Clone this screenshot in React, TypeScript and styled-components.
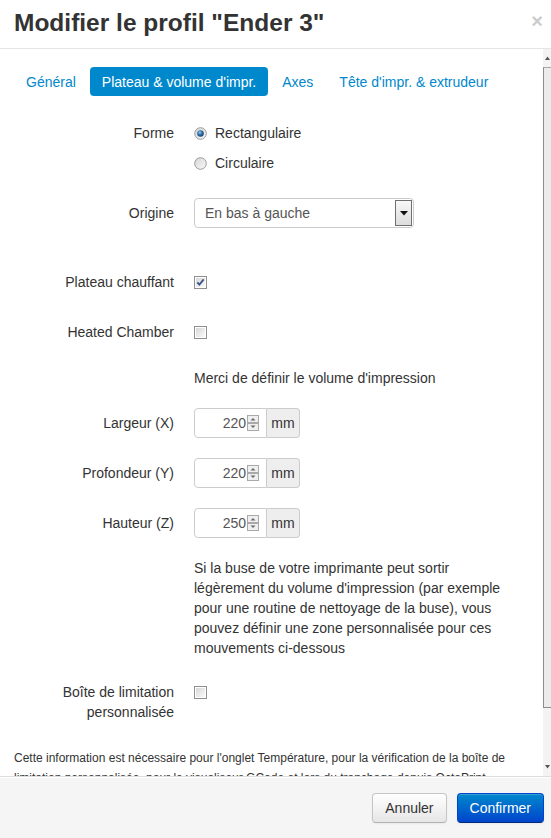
import React from "react";
import styled, { createGlobalStyle } from "styled-components";

const Global = createGlobalStyle`
  html, body { margin: 0; padding: 0; background: #fff; }
  body { font-family: "Liberation Sans", Arial, sans-serif; font-size: 14px; color: #333; }
  * { box-sizing: border-box; }
`;

const Modal = styled.div`
  width: 551px;
  height: 838px;
  display: flex;
  flex-direction: column;
  background: #fff;
  overflow: hidden;
`;

const Header = styled.div`
  height: 49px;
  flex: none;
  display: flex;
  align-items: center;
  justify-content: space-between;
  padding: 0 8px 0 14px;
  border-bottom: 1px solid #e5e5e5;
`;

const Title = styled.h3`
  margin: 0;
  font-size: 24.5px;
  font-weight: bold;
  color: #333;
  line-height: 30px;
  margin-top: -2px;
`;

const Close = styled.span`
  font-size: 20px;
  font-weight: bold;
  color: #000;
  opacity: 0.2;
  line-height: 20px;
  margin-top: -6px;
`;

const Body = styled.div`
  flex: 1;
  min-height: 0;
  display: flex;
`;

const Content = styled.div`
  flex: 1;
  overflow: hidden;
  padding: 18px 0 40px 14px;
`;

const ScrollTrack = styled.div`
  width: 8px;
  flex: none;
  background: #f3f3f3;
  display: flex;
  flex-direction: column;
  align-items: stretch;
`;

const ScrollArrow = styled.div`
  height: 18px;
  flex: none;
  display: flex;
  align-items: center;
  justify-content: center;
`;

const ScrollThumb = styled.div`
  height: 641px;
  flex: none;
  background: #ebebeb;
  border-left: 1px solid #8d8d8d;
  border-top: 1px solid #a8a8a8;
  border-bottom: 1px solid #8d8d8d;
`;

const ScrollRest = styled.div`
  flex: 1;
`;

const Nav = styled.ul`
  list-style: none;
  margin: 0 0 22px;
  padding: 0;
  display: flex;
  gap: 2px;
`;

const Pill = styled.li<{ $active?: boolean }>`
  height: 29px;
  display: flex;
  align-items: center;
  padding: 0 12px;
  border-radius: 4px;
  color: ${(p) => (p.$active ? "#fff" : "#0088cc")};
  background: ${(p) => (p.$active ? "#0088cc" : "transparent")};
  white-space: nowrap;
`;

const Group = styled.div<{ $mt?: number }>`
  display: grid;
  grid-template-columns: 160px 1fr;
  column-gap: 20px;
  margin-top: ${(p) => p.$mt ?? 0}px;
`;

const Label = styled.div<{ $lh?: number }>`
  text-align: right;
  line-height: ${(p) => p.$lh ?? 30}px;
  color: #333;
`;

const Controls = styled.div`
  display: flex;
  flex-direction: column;
  align-items: flex-start;
`;

const Line = styled.div<{ $h?: number }>`
  display: flex;
  align-items: center;
  gap: 8px;
  height: ${(p) => p.$h ?? 30}px;
  line-height: 20px;
`;

const Select = styled.div`
  width: 220px;
  height: 30px;
  border: 1px solid #ccc;
  border-radius: 4px;
  display: flex;
  align-items: center;
  justify-content: space-between;
  padding: 0 1px 0 10px;
  color: #555;
`;

const SelectButton = styled.div`
  width: 17px;
  height: 26px;
  border: 1px solid #6f6f6f;
  background: linear-gradient(#f8f8f8, #dcdcdc);
  display: flex;
  align-items: center;
  justify-content: center;
`;

const InputGroup = styled.div`
  display: flex;
  height: 30px;
`;

const NumberBox = styled.div`
  width: 73px;
  border: 1px solid #ccc;
  border-radius: 4px 0 0 4px;
  display: flex;
  align-items: center;
  justify-content: flex-end;
  padding-right: 7px;
  gap: 1px;
  color: #555;
`;

const AddOn = styled.div`
  width: 33px;
  border: 1px solid #ccc;
  border-left: none;
  border-radius: 0 4px 4px 0;
  background: #eee;
  display: flex;
  align-items: center;
  justify-content: center;
  color: #333;
`;

const Help = styled.p`
  margin: 0;
  width: 320px;
  line-height: 20px;
`;

const Note = styled.p`
  margin: 26px 0 0;
  font-size: 12px;
  line-height: 20px;
  width: 510px;
`;

const Footer = styled.div`
  height: 62px;
  flex: none;
  background: #f5f5f5;
  border-top: 1px solid #ddd;
  box-shadow: inset 0 1px 0 #fff;
  display: flex;
  align-items: center;
  justify-content: flex-end;
  gap: 10px;
  padding: 0 7px 0 0;
`;

const Button = styled.button<{ $primary?: boolean }>`
  height: 30px;
  padding: 0 12px;
  font-family: inherit;
  font-size: 14px;
  border-radius: 4px;
  border: 1px solid ${(p) => (p.$primary ? "#0044cc" : "#c5c5c5")};
  border-bottom-color: ${(p) => (p.$primary ? "#002a80" : "#b3b3b3")};
  color: ${(p) => (p.$primary ? "#fff" : "#333")};
  background: ${(p) =>
    p.$primary ? "linear-gradient(#0088cc, #0044cc)" : "linear-gradient(#ffffff, #e6e6e6)"};
  box-shadow: inset 0 1px 0 rgba(255,255,255,.2), 0 1px 2px rgba(0,0,0,.05);
`;

const Radio = ({ checked }: { checked?: boolean }) => (
  <svg width="13" height="13" viewBox="0 0 13 13">
    <defs>
      <linearGradient id="rg" x1="0" y1="0" x2="1" y2="1">
        <stop offset="0" stopColor="#d4d4d4" />
        <stop offset="1" stopColor="#fafafa" />
      </linearGradient>
      <radialGradient id="rd" cx="0.4" cy="0.35" r="0.7">
        <stop offset="0" stopColor="#9cc6ea" />
        <stop offset="0.5" stopColor="#2e6ca6" />
        <stop offset="1" stopColor="#143e66" />
      </radialGradient>
    </defs>
    <circle cx="6.5" cy="6.5" r="5.8" fill="url(#rg)" stroke="#9a9a9a" strokeWidth="1" />
    {checked && <circle cx="6.5" cy="6.5" r="3.3" fill="url(#rd)" />}
  </svg>
);

const Check = ({ checked }: { checked?: boolean }) => (
  <svg width="13" height="13" viewBox="0 0 13 13">
    <defs>
      <linearGradient id="cg" x1="0" y1="0" x2="1" y2="1">
        <stop offset="0" stopColor="#d6d6d6" />
        <stop offset="1" stopColor="#fbfbfb" />
      </linearGradient>
    </defs>
    <rect x="0.5" y="0.5" width="12" height="12" fill="#fff" stroke="#8f8f8f" />
    <rect x="2" y="2" width="9" height="9" fill="url(#cg)" />
    {checked && (
      <path d="M3.3 6.3 L5.4 8.6 L9.7 3.4" fill="none" stroke="#3d5488" strokeWidth="1.8" />
    )}
  </svg>
);

const Spinner = () => (
  <svg width="12" height="16" viewBox="0 0 12 16">
    <rect x="0.5" y="0.5" width="11" height="7" fill="#efefef" stroke="#a9a9a9" />
    <rect x="0.5" y="8.5" width="11" height="7" fill="#efefef" stroke="#a9a9a9" />
    <path d="M3.5 5.5 L6 3 L8.5 5.5 Z" fill="#6a6a6a" />
    <path d="M3.5 10.5 L6 13 L8.5 10.5 Z" fill="#6a6a6a" />
  </svg>
);

const Caret = () => (
  <svg width="8" height="5" viewBox="0 0 8 5">
    <path d="M0 0 H8 L4 4.5 Z" fill="#111" />
  </svg>
);

const TinyArrow = ({ down }: { down?: boolean }) => (
  <svg width="5" height="4" viewBox="0 0 5 4">
    <path d={down ? "M0 0 H5 L2.5 3.5 Z" : "M0 4 H5 L2.5 0.5 Z"} fill="#555" />
  </svg>
);

const NumberField = ({ value }: { value: string }) => (
  <InputGroup>
    <NumberBox>
      <span>{value}</span>
      <Spinner />
    </NumberBox>
    <AddOn>mm</AddOn>
  </InputGroup>
);

export default function App() {
  return (
    <Modal>
      <Global />
      <Header>
        <Title>Modifier le profil "Ender 3"</Title>
        <Close>×</Close>
      </Header>
      <Body>
        <Content>
          <Nav>
            <Pill>Général</Pill>
            <Pill $active>Plateau &amp; volume d'impr.</Pill>
            <Pill>Axes</Pill>
            <Pill>Tête d'impr. &amp; extrudeur</Pill>
          </Nav>

          <Group>
            <Label>Forme</Label>
            <Controls>
              <Line><Radio checked />Rectangulaire</Line>
              <Line><Radio />Circulaire</Line>
            </Controls>
          </Group>

          <Group $mt={20}>
            <Label>Origine</Label>
            <Controls>
              <Select>
                <span>En bas à gauche</span>
                <SelectButton><Caret /></SelectButton>
              </Select>
            </Controls>
          </Group>

          <Group $mt={39}>
            <Label>Plateau chauffant</Label>
            <Controls>
              <Line><Check checked /></Line>
            </Controls>
          </Group>

          <Group $mt={20}>
            <Label>Heated Chamber</Label>
            <Controls>
              <Line><Check /></Line>
            </Controls>
          </Group>

          <Group $mt={21}>
            <Label $lh={20}></Label>
            <Controls>
              <Line $h={20}>Merci de définir le volume d'impression</Line>
            </Controls>
          </Group>

          <Group $mt={20}>
            <Label>Largeur (X)</Label>
            <Controls><NumberField value="220" /></Controls>
          </Group>

          <Group $mt={20}>
            <Label>Profondeur (Y)</Label>
            <Controls><NumberField value="220" /></Controls>
          </Group>

          <Group $mt={20}>
            <Label>Hauteur (Z)</Label>
            <Controls><NumberField value="250" /></Controls>
          </Group>

          <Group $mt={20}>
            <Label $lh={20}></Label>
            <Controls>
              <Help>
                Si la buse de votre imprimante peut sortir légèrement du volume d'impression (par
                exemple pour une routine de nettoyage de la buse), vous pouvez définir une zone
                personnalisée pour ces mouvements ci-dessous
              </Help>
            </Controls>
          </Group>

          <Group $mt={24}>
            <Label $lh={20}>Boîte de limitation personnalisée</Label>
            <Controls>
              <Line $h={20}><Check /></Line>
            </Controls>
          </Group>

          <Note>
            Cette information est nécessaire pour l'onglet Température, pour la vérification de la
            boîte de limitation personnalisée, pour le visualiseur GCode et lors du tranchage depuis
            OctoPrint.
          </Note>
        </Content>
        <ScrollTrack>
          <ScrollArrow><TinyArrow /></ScrollArrow>
          <ScrollThumb />
          <ScrollRest />
          <ScrollArrow><TinyArrow down /></ScrollArrow>
        </ScrollTrack>
      </Body>
      <Footer>
        <Button>Annuler</Button>
        <Button $primary>Confirmer</Button>
      </Footer>
    </Modal>
  );
}
